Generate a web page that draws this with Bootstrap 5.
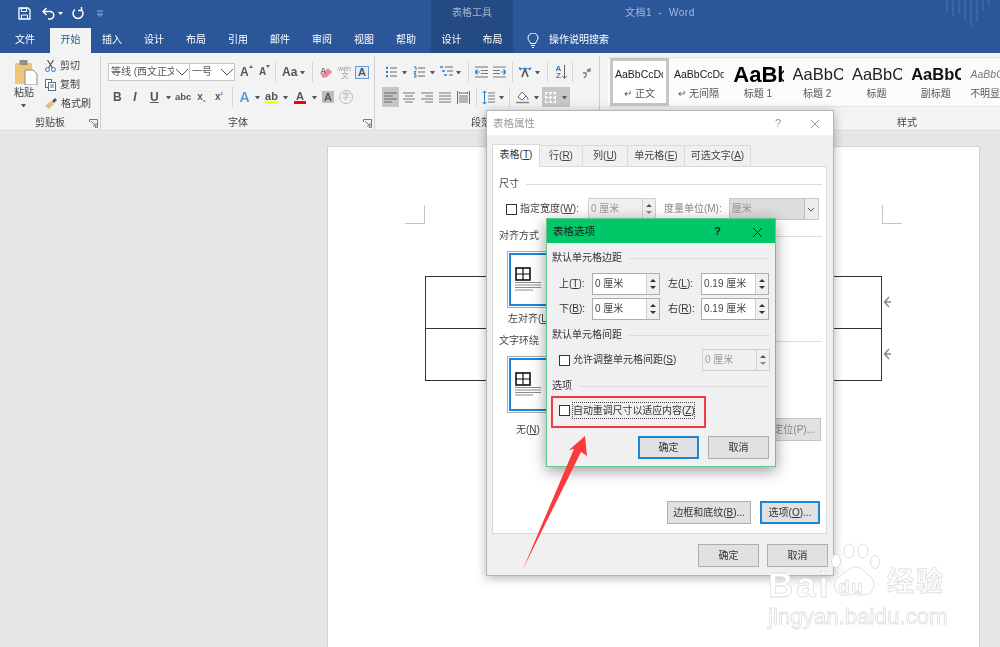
<!DOCTYPE html>
<html lang="zh">
<head>
<meta charset="utf-8">
<title>文档1 - Word</title>
<link href="https://cdn.jsdelivr.net/npm/bootstrap@5.3.0/dist/css/bootstrap.min.css" rel="stylesheet">
<style>
html,body{margin:0;background:#e6e6e6;overflow:hidden}
body{font-family:"Liberation Sans","Noto Sans CJK SC",sans-serif;font-size:10px;line-height:14px;color:#444}
.stage{position:relative;width:1000px;height:647px;overflow:hidden;filter:blur(.35px)}
svg{display:block;flex:none}
/* spacing helpers for toolbar rows */
.s1{margin-left:1px}.s2{margin-left:2px}.s3{margin-left:3px}.s4{margin-left:4px}.s5{margin-left:5px}.s6{margin-left:6px}.s7{margin-left:7px}.s8{margin-left:8px}.s9{margin-left:9px}.s10{margin-left:10px}.s11{margin-left:11px}.s12{margin-left:12px}
.w6{width:6px}.w7{width:7px}.w8{width:8px}.w10{width:10px}.w11{width:11px}.w12{width:12px}.w13{width:13px}.w14{width:14px}
/* title + tabs */
.head{background:#2b579a;color:#fff;height:53px}
.trow{height:28px}
.qat{width:431px;padding:7px 0 0 18px}
.ctx{width:82px;background:#234a82}
.ctx-title{height:28px;line-height:25px;text-align:center;color:#a8b6cb}
.doc-title{margin-left:112px;line-height:25px;color:#a8b8d2;letter-spacing:.5px}
.deco{margin-left:auto}
.tab{height:25px;line-height:24px;text-align:center;width:42px;color:#fff}
.tab.first{width:50px}
.tab.on{width:41px;background:#f3f3f3;color:#2b579a}
.ctx-tabs{display:flex;margin-left:4px;background:#234a82;height:25px;width:82px}
.ctx-tabs .tab{width:41px}
.tell{margin-left:14px;gap:10px;height:24px}
/* ribbon */
.ribbon{height:77px;background:#f3f3f3}
.strip{height:3px;background:#ebebeb;border-top:1px solid #dcdcdc}
.grp{position:relative;height:75px;border-right:1px solid #cfcfcf;margin-top:3px;flex:none}
.g1{width:101px}.g2{width:273px;margin-left:1px}.g3{width:225px;margin-left:0}
.glabel{position:absolute;left:0;right:0;top:60px;text-align:center;color:#444}
.g3 .glabel{right:12px}
.launch{position:absolute;right:2px;top:63px}
.paste{width:45px;padding:3px 0 0 14px}
.paste span{display:block;width:20px;margin-top:1px;text-align:center;line-height:14px}
.clip-row{height:19px;gap:4px}
.rw{height:18px}
.rw1{margin-top:7px}
.rw2{margin-top:7px}
.sel{height:18px;background:#fff;border:1px solid #c6c6c6;display:flex;align-items:center;overflow:hidden;color:#555;font-size:10px;padding-left:2px;justify-content:space-between}
.sel .t{white-space:nowrap;overflow:hidden}
.f{width:82px}.z{width:45px;margin-left:0;border-left:0}
.dn{width:5px;height:3px;border-left:2.5px solid transparent;border-right:2.5px solid transparent;border-top:3px solid #595959;box-sizing:border-box;flex:none}
.sep{width:1px;height:20px;background:#d4d4d4;flex:none}
.tx{flex:none;color:#555;text-align:center;font-family:"Liberation Sans",sans-serif;font-weight:700;white-space:nowrap}
.b12{font-size:12px}
.s95{font-size:9.5px}
.btA{font-size:14px;color:#5b9bd5}
.hl{background:#c6c6c6;height:20px;display:flex;align-items:center;justify-content:center}
.w17{width:17px}.w28{width:28px;gap:6px}
.box-a{width:14px;height:13px;border:1px solid #6b9bd2;background:#e3eaf3;font-size:11px;line-height:11px;font-weight:700;text-align:center;color:#555;flex:none}
.gray-a{width:12px;height:12px;background:#bdbdbd;font-size:11px;line-height:12px;font-weight:700;text-align:center;color:#555;flex:none}
.bar{display:block;height:3px;margin-top:0}
.yb{background:#ffff00}.rb{background:#ff0000}
.uchar{display:block;text-align:center;font-size:11px;line-height:10px;font-weight:700;color:#555}
.cchar{width:14px;height:14px;border:1px solid #bbb;border-radius:50%;font-size:8px;line-height:12px;text-align:center;color:#aaa;flex:none}
.wen{font-size:7px;line-height:7px;font-weight:400;color:#999}
.wen2{font-size:8px;line-height:8px;font-weight:400;color:#999}
.az{display:flex;flex-direction:column;width:7px;font-size:8px;line-height:7.500px;text-align:center}
.az .a{color:#2b7cd3}.az .z2{color:#9a59b5}
.tx sub,.tx sup{font-size:7px;color:#2b7cd3}
/* style gallery */
.gal{margin-left:8px;position:relative;flex:1;min-width:0;overflow:hidden;height:77px}
.gal-items{height:50px;margin-top:4px;padding-left:2px;background:#fbfbfb;border-top:1px solid #e3e3e3;border-bottom:1px solid #e3e3e3}
.st{width:59.3px;flex:none;overflow:hidden;text-align:center;height:48px}
.st.on{width:59px;background:#fff;border:3px solid #c6c6c6}
.pv{height:26px;line-height:27px;white-space:nowrap;overflow:hidden;color:#222;margin:3px 4px 0 5px;text-align:left}
.st.on .pv{margin:0 3px 0 2px}
.sb{line-height:14px;color:#555;white-space:nowrap;font-size:10px}
.p12{font-size:10.5px}.p-big{font-size:22px;font-weight:700;color:#000}.p16{font-size:16.5px}.p16b{font-size:16.5px;font-weight:700;color:#111}.pi{font-size:10.5px;font-style:italic;color:#777}
.gal-label{position:absolute;right:83px;top:63px;color:#444}
/* document */
.docarea{height:514px;padding:13px 0 0 327px}
.page{width:653px;height:520px;background:#fff;border:1px solid #d2d2d2;padding-top:58px}
.marks{padding:0 77px}
.mk{width:20px;height:19px;border-bottom:1px solid #c4c4c4}
.mk.l{border-right:1px solid #c4c4c4}
.mk.r{border-left:1px solid #c4c4c4}
.tbl-row{margin:52px 0 0 97px}
.tbl{width:457px;border-collapse:collapse;margin:0}
.tbl td{height:52px;border:1px solid #333;padding:0}
.ends{margin-left:1px}
.ends div{height:52px;display:flex;align-items:center}
/* dialogs */
.dlg{position:absolute;background:#f0f0f0;color:#333;font-size:10px;line-height:14px}
.d1{left:486px;top:110px;width:348px;height:466px;border:1px solid #b4b4b4;box-shadow:0 2px 10px rgba(0,0,0,.3);color:#444}
.d2{left:546px;top:218px;width:230px;height:249px;border:1px solid #62c592;box-shadow:0 4px 14px rgba(0,0,0,.4)}
.dt{height:24px;background:#fff;padding:0 13px 0 6px;color:#999;font-size:10.5px;line-height:24px}
.d2 .dt{background:#00c768;color:#222;height:24px;padding:0 12px 0 6px}
.dt .q{margin-left:auto;margin-right:29px;font-size:11px;color:#999}
.d2 .dt .q{margin-right:31px;color:#222;font-weight:700}
.nav-tabs.wt{--bs-nav-tabs-border-width:0;margin:8px 0 0 5px;height:23px;border:0;flex-wrap:nowrap;align-items:flex-end}
.wt .nav-link{height:21px;padding:0;line-height:20px;text-align:center;font-size:10px;color:#444;background:#f0f0f0;border:1px solid #dadada;border-bottom:0;border-radius:0;margin:0;margin-left:-1px}
.wt .nav-link.active{height:23px;background:#fff;color:#333;border-color:#dadada;position:relative;z-index:1;margin-bottom:-1px;margin-left:0}
.t1{width:48px}.t2{width:44px}.t3{width:46px}.t4{width:58px}.t5{width:67px}
.panel{width:335px;height:368px;margin-left:5px;background:#fff;border:1px solid #dadada;padding:0 4px 0 6px}
.sh{gap:7px;height:14px;white-space:nowrap}
.sh:after{content:"";flex:1;height:1px;background:#dcdcdc}
.m11{margin-top:10px}.m9{margin-top:9px}.m8{margin-top:8px}
.dim{height:22px;margin-top:7px;padding-left:7px;white-space:nowrap}
.form-check-input.cb{width:11px;height:11px;margin:0;border:1px solid #333;border-radius:0;background-color:#fff;flex:none;float:none}
.fld{display:flex;height:22px;border:1px solid #adadad;background:#fff;flex:none}
.fld .v{flex:1;padding-left:2px;line-height:19px;color:#444;font-size:10px;white-space:nowrap;overflow:hidden}
.spin{width:13px;border-left:1px solid #d0d0d0;background:#f0f0f0;display:flex;flex-direction:column;justify-content:space-evenly;align-items:center}
.spin i{display:block;width:0;height:0;border-left:3px solid transparent;border-right:3px solid transparent}
.spin i.u{border-bottom:3px solid #333}.spin i.d{border-top:3px solid #333}
.fld.off{background:#f0f0f0;border-color:#d0d0d0}
.fld.off .v{color:#999}
.fld.off .spin i.u{border-bottom-color:#555}.fld.off .spin i.d{border-top-color:#888}
.w68{width:68px}
.unit{width:90px;height:22px;margin-left:7px;background:#dcdcdc;border:1px solid #c8c8c8;color:#999;line-height:20px;padding-left:2px;position:relative}
.unit b{position:absolute;right:0;top:0;bottom:0;width:14px;background:#ececec;border-left:1px solid #bcbcbc;display:flex;align-items:center;justify-content:center}
.muted{color:#888}
.pic{width:70px;height:57px;border:1px solid #a9a9a9;padding:1px;background:#fff;margin:8px 0 0 8px}
.pic div{height:100%;border:2px solid #1b86dc;padding:12px 0 0 4px}
.cap-a{margin:4px 0 0 9px;height:14px}
.cap-b{height:23px;margin-top:5px;padding:0 1px 0 17px}
.btn.w{--bs-btn-padding-y:0;--bs-btn-padding-x:0;--bs-btn-font-size:10px;--bs-btn-line-height:21px;--bs-btn-border-radius:0;--bs-btn-color:#333;--bs-btn-bg:#e1e1e1;--bs-btn-border-color:#adadad;height:23px;width:61px;flex:none}
.btn.w.def{border:2px solid #1a86d8;line-height:19px}
.btn.ghost{color:#888;width:70px;border-color:#c4c4c4;text-align:right;padding-right:5px}
.btn.w84{width:84px}
.btn.w60{width:60px}
.op{margin-top:60px;gap:9px;padding-right:2px}
.d1-foot{margin-top:10px;gap:8px;padding-right:5px}
.d2 .bd{padding:0 5px}
.d2 .sh{margin-top:8px}
.d2 .sh.first{margin-top:8px}
.mg{height:22px;margin-top:3px}
.mg.top{margin-top:8px}
.mg .lb{width:40px;padding-left:7px;white-space:nowrap}
.mg .lb2{width:33px;margin-left:8px;white-space:nowrap}
.fld.w2{width:68px;margin-left:0}
.gp{height:22px;margin-top:7px;padding-left:7px;gap:3px;white-space:nowrap}
.gp .fld{margin-left:auto;margin-right:0;width:68px}
.chk{margin-top:9px;padding-left:7px;height:17px;gap:2px;white-space:nowrap}
.dot{border:1px dotted #444;padding:0;line-height:15px;height:17px;letter-spacing:-.1px}
.foot2{margin-top:17px;gap:9px;padding-right:1px}
.redbox{position:absolute;left:551px;top:396px;width:155px;height:32px;border:2px solid #f53a3f}
.arrow{position:absolute;left:515px;top:430px}
.wm{position:absolute;left:760px;top:540px;width:200px;height:90px;color:#fff}
.wm .bai{position:absolute;left:8px;top:25px;font:700 35px/40px "Liberation Sans",sans-serif;-webkit-text-stroke:.8px #dedede;letter-spacing:3px}
.wm .du{position:absolute;left:78px;top:36px;font:700 19px/22px "Liberation Sans",sans-serif;color:#fff;-webkit-text-stroke:.8px #dedede;letter-spacing:1.5px}
.wm .jy{position:absolute;left:127px;top:24px;font:700 27px/32px "Noto Sans CJK SC",sans-serif;-webkit-text-stroke:.8px #dedede;letter-spacing:2px;white-space:nowrap}
.wm .url{position:absolute;left:8px;top:63px;font:400 22.5px/28px "Liberation Sans",sans-serif;-webkit-text-stroke:.8px #dedede;white-space:nowrap;letter-spacing:-.1px}
.wm svg{position:absolute;left:70px;top:2px}
</style>
</head>
<body>
<svg width="0" height="0" style="position:absolute">
  <defs>
    <symbol id="tb" viewBox="0 0 27 24">
      <rect x="1" y="1" width="14" height="12" fill="#fff" stroke="#111" stroke-width="1.6"/><path d="M8 1v12M1 7h14" stroke="#111" stroke-width="1.2"/>
      <path d="M0 15.500h26M0 18h26M0 20.500h26M0 23h18" stroke="#8c8c8c" stroke-width="1.2"/>
    </symbol>
    <symbol id="launch" viewBox="0 0 9 9"><path d="M.5 3V.5H8.500V8.500H6M2 2l5 5M7 4v3H4" fill="none" stroke="#777"/></symbol>
  </defs>
</svg>
<div class="stage">
  <header class="head">
    <div class="trow d-flex">
      <div class="qat d-flex align-items-start">
        <svg width="13" height="13" viewBox="0 0 13 13"><path d="M1 1h9l2 2v9H1z" fill="none" stroke="#fff" stroke-width="1.3"/><path d="M3.500 1.500h5v3h-5zM3.500 12V8h6v4" fill="none" stroke="#fff"/></svg>
        <svg class="s11" width="13" height="13" viewBox="0 0 13 13"><path d="M4.500 1 1 4.500 4.500 8M1.500 4.500H8a3.700 3.700 0 0 1 0 7.500H6" fill="none" stroke="#fff" stroke-width="1.500"/></svg>
        <svg class="s3" width="5" height="13" viewBox="0 0 5 13"><path d="M0 5h5L2.500 8z" fill="#fff"/></svg>
        <svg class="s8" width="13" height="13" viewBox="0 0 13 13"><path d="M4 2.500A5 5 0 1 0 10 2.500M10.500 0v3.500H7" fill="none" stroke="#fff" stroke-width="1.500"/></svg>
        <svg class="s12" width="8" height="13" viewBox="0 0 8 13"><path d="M1 4h6M1.500 7h5L4 9.500z" fill="none" stroke="#9fb4d4"/></svg>
      </div>
      <div class="ctx ctx-title">表格工具</div>
      <div class="doc-title">文档1&nbsp; -&nbsp; Word</div>
      <svg class="deco" width="56" height="26" viewBox="0 0 56 26"><path d="M3 0v12M9 0v16M15 0v14M21 0v20M27 0v26M33 0v22M39 0v10M45 0v6" stroke="#3c659f" stroke-width="2"/></svg>
    </div>
    <nav class="d-flex">
      <div class="tab first">文件</div><div class="tab on">开始</div>
      <div class="tab">插入</div><div class="tab">设计</div><div class="tab">布局</div><div class="tab">引用</div><div class="tab">邮件</div><div class="tab">审阅</div><div class="tab">视图</div><div class="tab">帮助</div>
      <div class="ctx-tabs"><div class="tab">设计</div><div class="tab">布局</div></div>
      <div class="tell d-flex align-items-center">
        <svg width="12" height="15" viewBox="0 0 12 15"><path d="M3.500 10.500C3 8 1 7.500 1 5a5 5 0 0 1 10 0c0 2.500-2 3-2.500 5.500zM4 12.500h4M5 14.500h2" fill="none" stroke="#fff"/></svg>
        <span class="search">操作说明搜索</span>
      </div>
    </nav>
  </header>

  <section class="ribbon d-flex">
    <div class="grp g1 d-flex">
      <div class="paste">
        <svg width="24" height="26" viewBox="0 0 24 26"><rect x="1" y="4" width="17" height="21" rx="1" fill="#eec67b"/><rect x="5.500" y="1" width="8" height="5" fill="#8f8f8f"/><path d="M11 11h8l4 4v11H11z" fill="#fff" stroke="#8a8a8a"/></svg>
        <span>粘贴</span>
        <div class="dn s7 mt-1"></div>
      </div>
      <div>
        <div class="clip-row d-flex align-items-center">
          <svg width="11" height="12" viewBox="0 0 11 12"><path d="M2.500 0l5 8M8.500 0l-5 8" stroke="#555" stroke-width="1.200"/><circle cx="2.500" cy="9.500" r="2" fill="none" stroke="#2b7cd3"/><circle cx="8.500" cy="9.500" r="2" fill="none" stroke="#2b7cd3"/></svg>
          <span>剪切</span>
        </div>
        <div class="clip-row d-flex align-items-center">
          <svg width="11" height="12" viewBox="0 0 11 12"><rect x=".5" y=".5" width="6" height="8" fill="#fff" stroke="#6a6a6a"/><rect x="3.500" y="3.500" width="7" height="8" fill="#fff" stroke="#6a6a6a"/><path d="M5 6h4M5 8h4" stroke="#2b7cd3"/></svg>
          <span>复制</span>
        </div>
        <div class="clip-row d-flex align-items-center">
          <svg width="12" height="11" viewBox="0 0 12 11"><path d="M0 8l6-5 3 3-5 5z" fill="#e7bd73"/><path d="M7 3l3-3 2 2-3 3z" fill="#555"/></svg>
          <span>格式刷</span>
        </div>
      </div>
      <div class="glabel">剪贴板</div>
      <svg class="launch" width="9" height="9"><use href="#launch"/></svg>
    </div>

    <div class="grp g2">
      <div class="rw rw1 d-flex align-items-center">
        <div class="sel f s6"><span class="t">等线 (西文正文</span><svg class="s1" width="14" height="8" viewBox="0 0 14 8"><path d="M1 1l6 6 6-6" fill="none" stroke="#555"/></svg></div>
        <div class="sel z"><span class="t">一号</span><svg width="14" height="8" viewBox="0 0 14 8"><path d="M1 1l6 6 6-6" fill="none" stroke="#555"/></svg></div>
        <span class="tx s5 w10 d-flex b12 align-items-start">A<svg width="4" height="3" viewBox="0 0 4 3"><path d="M0 3l2-3 2 3z" fill="#2b7cd3"/></svg></span>
        <span class="tx s9 w10 d-flex align-items-start">A<svg width="4" height="3" viewBox="0 0 4 3"><path d="M0 0l2 3 2-3z" fill="#2b7cd3"/></svg></span>
        <span class="sep s6"></span>
        <span class="tx s6 w12 b12">Aa</span>
        <span class="dn s6"></span>
        <span class="sep s7"></span>
        <svg class="s7" width="13" height="13" viewBox="0 0 13 13"><path d="M3 12 1 9l7-7 4 4-5 5z" fill="#ea8a9a"/><text x="0" y="8" font-size="9" font-weight="700" fill="#7a7a7a" font-family="Liberation Sans">A</text></svg>
        <span class="tx s5 w13 d-flex flex-column align-items-center"><small class="wen">wén</small><span class="wen2">文</span></span>
        <span class="box-a s4">A</span>
      </div>
      <div class="rw rw2 d-flex align-items-center">
        <span class="tx b12 s11 w8">B</span>
        <span class="tx b12 s11 w6 fst-italic">I</span>
        <span class="tx b12 s12 w7 text-decoration-underline">U</span>
        <span class="dn s9"></span>
        <span class="tx s95 s4 w14">abc</span>
        <span class="tx s7 w11">x<sub>₂</sub></span>
        <span class="tx s7 w10">x<sup>²</sup></span>
        <span class="sep s8"></span>
        <span class="tx btA s6 w11">A</span>
        <span class="dn s5"></span>
        <span class="s5 tx w13"><span class="uchar">ab</span><span class="bar yb"></span></span>
        <span class="dn s5"></span>
        <span class="s6 tx w12"><span class="uchar">A</span><span class="bar rb"></span></span>
        <span class="dn s6"></span>
        <span class="gray-a s5">A</span>
        <span class="cchar s5">字</span>
      </div>
      <div class="glabel">字体</div>
      <svg class="launch" width="9" height="9"><use href="#launch"/></svg>
    </div>

    <div class="grp g3">
      <div class="rw rw1 d-flex align-items-center">
        <svg class="s10" width="12" height="12" viewBox="0 0 12 12"><path d="M1 2h2M1 6h2M1 10h2" stroke="#2b7cd3" stroke-width="2"/><path d="M5 2h7M5 6h7M5 10h7" stroke="#666"/></svg>
        <span class="dn s5"></span>
        <svg class="s6" width="12" height="12" viewBox="0 0 12 12"><path d="M1 1h2v3M1 5.500h2l-2 2h2M1 9h2v2H1" fill="none" stroke="#2b7cd3"/><path d="M5 2h7M5 6h7M5 10h7" stroke="#666"/></svg>
        <span class="dn s5"></span>
        <svg class="s5" width="13" height="12" viewBox="0 0 13 12"><path d="M0 1h3M2 5h3M4 9h3" stroke="#2b7cd3" stroke-width="1.500"/><path d="M5 1h8M7 5h6M9 9h4" stroke="#666"/></svg>
        <span class="dn s3"></span>
        <span class="sep s7"></span>
        <svg class="s6" width="13" height="12" viewBox="0 0 13 12"><path d="M0 1h13M6 4.500h7M6 7.500h7M0 11h13" stroke="#777"/><path d="M0 6h5M0 6l2.500-2.500M0 6l2.500 2.500" stroke="#2b7cd3" fill="none" stroke-width="1.200"/></svg>
        <svg class="s5" width="13" height="12" viewBox="0 0 13 12"><path d="M0 1h13M0 4.500h7M0 7.500h7M0 11h13" stroke="#777"/><path d="M8 6h5M13 6l-2.500-2.500M13 6l-2.500 2.500" stroke="#2b7cd3" fill="none" stroke-width="1.200"/></svg>
        <span class="sep s6"></span>
        <svg class="s5" width="14" height="12" viewBox="0 0 14 12"><path d="M4 11 7 3l3 8" fill="none" stroke="#555" stroke-width="1.600"/><path d="M1 2c3 1 9 1 12 0M1 2l2 2M13 2l-2 2" fill="none" stroke="#2b7cd3" stroke-width="1.300"/></svg>
        <span class="dn s3"></span>
        <span class="sep s7"></span>
        <span class="s7 d-flex">
          <span class="tx az"><span class="a">A</span><span class="z2">Z</span></span>
          <svg width="5" height="15" viewBox="0 0 5 15"><path d="M2.500 0v13M0 10.500l2.500 3 2.500-3" fill="none" stroke="#666"/></svg>
        </span>
        <span class="sep s5"></span>
        <svg class="s9" width="9" height="11" viewBox="0 0 9 11"><path d="M1 6h3v3M8 1v3H5M4 9l-2 2M5 4l2-2" fill="none" stroke="#777" stroke-width="1.300"/></svg>
      </div>
      <div class="rw rw2 d-flex align-items-center">
        <span class="hl w17 s7"><svg width="13" height="11" viewBox="0 0 13 11"><path d="M0 1h13M0 4h9M0 7h13M0 10h8" stroke="#666" stroke-width="1.100"/></svg></span>
        <svg class="s4" width="12" height="11" viewBox="0 0 12 11"><path d="M0 1h12M2 4h8M0 7h12M2 10h8" stroke="#777"/></svg>
        <svg class="s6" width="12" height="11" viewBox="0 0 12 11"><path d="M0 1h12M4 4h8M0 7h12M4 10h8" stroke="#777"/></svg>
        <svg class="s6" width="12" height="11" viewBox="0 0 12 11"><path d="M0 1h12M0 4h12M0 7h12M0 10h12" stroke="#777"/></svg>
        <svg class="s6" width="13" height="13" viewBox="0 0 13 13"><path d="M.5 0v13M12.500 0v13" stroke="#2b7cd3"/><path d="M2 2h9M3 1 2 2l1 1M10 1l1 1-1 1" fill="none" stroke="#2b7cd3"/><path d="M2 5h9M2 7h9M2 9h9M2 11h9" stroke="#777"/></svg>
        <span class="sep s6"></span>
        <svg class="s5" width="13" height="15" viewBox="0 0 13 15"><path d="M2.500 1v13M.5 3l2-2 2 2M.5 12l2 2 2-2" fill="none" stroke="#2b7cd3"/><path d="M6 3h7M6 6h7M6 9h7M6 12h7" stroke="#777"/></svg>
        <span class="dn s4"></span>
        <span class="sep s5"></span>
        <svg class="s6" width="13" height="14" viewBox="0 0 13 14"><path d="M2 7l4-5 4 4-4 4z" fill="#fff" stroke="#666"/><path d="M10 6c2 1 2 4 2 4" stroke="#2b7cd3" fill="none"/><path d="M0 12.500h13" stroke="#888" stroke-width="1.500"/></svg>
        <span class="dn s5"></span>
        <span class="hl w28 s3"><svg width="11" height="11" viewBox="0 0 11 11"><path d="M0 .5h11M0 5.500h11M0 10.500h11M.5 0v11M5.500 0v11M10.500 0v11" stroke="#fff" stroke-dasharray="3 1" stroke-width="1.300"/></svg><span class="dn"></span></span>
      </div>
      <div class="glabel">段落</div>
    </div>

    <div class="gal">
      <div class="gal-items d-flex">
        <div class="st on"><div class="pv p12">AaBbCcDd</div><div class="sb">↵ 正文</div></div>
        <div class="st"><div class="pv p12">AaBbCcDd</div><div class="sb">↵ 无间隔</div></div>
        <div class="st"><div class="pv p-big">AaBb</div><div class="sb">标题 1</div></div>
        <div class="st"><div class="pv p16">AaBbC</div><div class="sb">标题 2</div></div>
        <div class="st"><div class="pv p16">AaBbC</div><div class="sb">标题</div></div>
        <div class="st"><div class="pv p16b">AaBbC</div><div class="sb">副标题</div></div>
        <div class="st"><div class="pv pi">AaBbCcD</div><div class="sb">不明显强调</div></div>
      </div>
      <div class="gal-label">样式</div>
    </div>
  </section>
  <div class="strip"></div>

  <main class="docarea">
    <div class="page">
      <div class="marks d-flex justify-content-between"><div class="mk l"></div><div class="mk r"></div></div>
      <div class="tbl-row d-flex">
        <table class="tbl"><tbody><tr><td></td></tr><tr><td></td></tr></tbody></table>
        <div class="ends">
          <div><svg width="8" height="12" viewBox="0 0 8 12"><path d="M6 1 1.500 6 6 11M2 6h6" fill="none" stroke="#888" stroke-width="1.500"/></svg></div>
          <div><svg width="8" height="12" viewBox="0 0 8 12"><path d="M6 1 1.500 6 6 11M2 6h6" fill="none" stroke="#888" stroke-width="1.500"/></svg></div>
        </div>
      </div>
    </div>
  </main>

  <!-- 表格属性 dialog -->
  <div class="dlg d1">
    <div class="dt d-flex"><span>表格属性</span><span class="q">?</span>
      <svg class="mt-2" width="10" height="10" viewBox="0 0 10 10"><path d="M1 1l8 8M9 1l-8 8" stroke="#999"/></svg></div>
    <ul class="nav nav-tabs wt">
      <li class="nav-item"><a class="nav-link active t1">表格(<u>T</u>)</a></li>
      <li class="nav-item"><a class="nav-link t2">行(<u>R</u>)</a></li>
      <li class="nav-item"><a class="nav-link t3">列(<u>U</u>)</a></li>
      <li class="nav-item"><a class="nav-link t4">单元格(<u>E</u>)</a></li>
      <li class="nav-item"><a class="nav-link t5">可选文字(<u>A</u>)</a></li>
    </ul>
    <div class="panel">
      <div class="sh d-flex align-items-center m11">尺寸</div>
      <div class="dim d-flex align-items-center">
        <input class="form-check-input cb" type="checkbox" aria-label="指定宽度">
        <span class="s3">指定宽度(<u>W</u>):</span>
        <div class="fld off w68 s9"><div class="v">0 厘米</div><div class="spin"><i class="u"></i><i class="d"></i></div></div>
        <span class="s8 muted">度量单位(M):</span>
        <div class="unit">厘米<b><svg width="8" height="5" viewBox="0 0 8 5"><path d="M1 1l3 3 3-3" fill="none" stroke="#555"/></svg></b></div>
      </div>
      <div class="sh d-flex align-items-center m9">对齐方式</div>
      <div class="pic"><div><svg width="27" height="24"><use href="#tb"/></svg></div></div>
      <div class="cap-a">左对齐(<u>L</u>)</div>
      <div class="sh d-flex align-items-center m8">文字环绕</div>
      <div class="pic"><div><svg width="27" height="24"><use href="#tb"/></svg></div></div>
      <div class="cap-b d-flex align-items-center justify-content-between">
        <span>无(<u>N</u>)</span>
        <button class="btn w ghost" type="button">定位(P)...</button>
      </div>
      <div class="op d-flex justify-content-end">
        <button class="btn w w84" type="button">边框和底纹(<u>B</u>)...</button>
        <button class="btn w w60 def" type="button">选项(<u>O</u>)...</button>
      </div>
    </div>
    <div class="d1-foot d-flex justify-content-end">
      <button class="btn w" type="button">确定</button>
      <button class="btn w" type="button">取消</button>
    </div>
  </div>

  <!-- 表格选项 dialog -->
  <div class="dlg d2">
    <div class="dt d-flex"><span>表格选项</span><span class="q">?</span>
      <svg class="mt-2" width="11" height="11" viewBox="0 0 11 11"><path d="M1 1l9 9M10 1l-9 9" stroke="#222"/></svg></div>
    <div class="bd">
      <div class="sh first d-flex align-items-center">默认单元格边距</div>
      <div class="mg top d-flex align-items-center">
        <span class="lb">上(<u>T</u>):</span>
        <div class="fld w2"><div class="v">0 厘米</div><div class="spin"><i class="u"></i><i class="d"></i></div></div>
        <span class="lb2">左(<u>L</u>):</span>
        <div class="fld w2"><div class="v">0.19 厘米</div><div class="spin"><i class="u"></i><i class="d"></i></div></div>
      </div>
      <div class="mg d-flex align-items-center">
        <span class="lb">下(<u>B</u>):</span>
        <div class="fld w2"><div class="v">0 厘米</div><div class="spin"><i class="u"></i><i class="d"></i></div></div>
        <span class="lb2">右(<u>R</u>):</span>
        <div class="fld w2"><div class="v">0.19 厘米</div><div class="spin"><i class="u"></i><i class="d"></i></div></div>
      </div>
      <div class="sh d-flex align-items-center">默认单元格间距</div>
      <div class="gp d-flex align-items-center">
        <input class="form-check-input cb" type="checkbox" aria-label="允许调整单元格间距">
        <span>允许调整单元格间距(<u>S</u>)</span>
        <div class="fld off"><div class="v">0 厘米</div><div class="spin"><i class="u"></i><i class="d"></i></div></div>
      </div>
      <div class="sh d-flex align-items-center">选项</div>
      <div class="chk d-flex align-items-center">
        <input class="form-check-input cb" type="checkbox" aria-label="自动重调尺寸以适应内容">
        <span class="dot">自动重调尺寸以适应内容(<u>Z</u>)</span>
      </div>
      <div class="foot2 d-flex justify-content-end">
        <button class="btn w def" type="button">确定</button>
        <button class="btn w" type="button">取消</button>
      </div>
    </div>
  </div>

  <div class="redbox"></div>
  <svg class="arrow" width="80" height="145" viewBox="515 430 80 145"><polygon points="523,569 574,449 569,450 585,436 587,456 581,452" fill="#fb3a3e"/></svg>

  <div class="wm" aria-label="Baidu 经验 jingyan.baidu.com">
    <svg width="60" height="56" viewBox="0 0 60 56"><g fill="#fff" stroke="#dedede"><ellipse cx="6" cy="19" rx="4.500" ry="6.500"/><ellipse cx="19" cy="9" rx="5" ry="7"/><ellipse cx="33" cy="9" rx="5" ry="7"/><ellipse cx="45" cy="20" rx="4.500" ry="6.500"/><path d="M26 25c5 0 9 5 14 9 7 6 4 19-6 19-5 0-6-1-9-1s-6 2-11 1C4 53 1 41 9 35c6-4 10-10 17-10z"/></g></svg>
    <span class="bai">Bai</span><span class="du">du</span><span class="jy">经验</span>
    <span class="url">jingyan.baidu.com</span>
  </div>
</div>
</body>
</html>
